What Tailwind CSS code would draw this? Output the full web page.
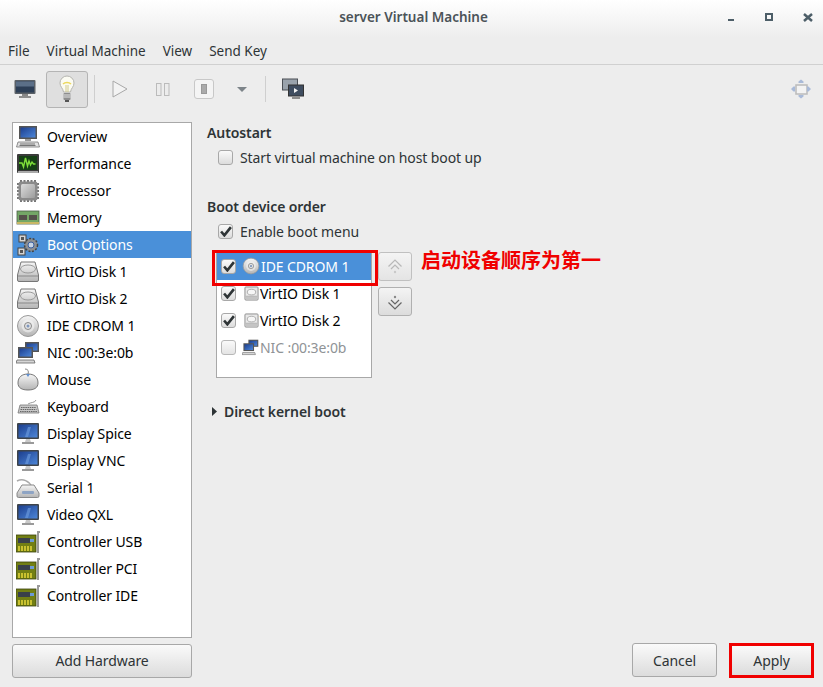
<!DOCTYPE html>
<html lang="en">
<head>
  <meta charset="UTF-8">
  <title>server Virtual Machine</title>
  <script src="https://cdn.jsdelivr.net/npm/@tailwindcss/browser@4"></script>
</head>
<body class="bg-[#ededed] font-['Noto_Sans','Noto_Sans_CJK_SC',sans-serif] text-[14px] tracking-[-0.1px] text-[#2e3436] overflow-hidden">

  <!-- shared icons -->
  <svg class="absolute w-0 h-0">
    <defs>
      <linearGradient id="screen" x1="0" y1="0" x2="1" y2="1"><stop offset="0" stop-color="#1c3f8f"/><stop offset="1" stop-color="#4d86d8"/></linearGradient>
      <linearGradient id="metal" x1="0" y1="0" x2="0" y2="1"><stop offset="0" stop-color="#f6f6f6"/><stop offset="1" stop-color="#b4b4b4"/></linearGradient>
      <linearGradient id="chip" x1="0" y1="0" x2="1" y2="1"><stop offset="0" stop-color="#dcdcdc"/><stop offset="1" stop-color="#9c9c9c"/></linearGradient>
    </defs>
    <symbol id="display" viewBox="0 0 24 24">
      <rect x="1" y="1" width="22" height="16" rx="1" fill="#3f444a"/>
      <rect x="2.500" y="2.500" width="19" height="13" fill="url(#screen)"/>
      <path d="M9 15l3-10h3l-3 10z" fill="#6f9ee0" opacity=".6"/>
      <path d="M10 17h4l1 3h-6z" fill="#c9c9c9"/><rect x="6" y="20" width="12" height="2" fill="#9a9a9a"/>
    </symbol>
    <symbol id="host" viewBox="0 0 24 24">
      <rect x="3" y="1" width="18" height="13" fill="#555"/><rect x="4.500" y="2.500" width="15" height="10" fill="url(#screen)"/>
      <rect x="9" y="14" width="6" height="2" fill="#999"/>
      <path d="M2 17h20l1.500 5H.5z" fill="#e2e2e2" stroke="#777" stroke-width=".8"/>
      <path d="M4 19h15M3.500 20.500h16" stroke="#777"/>
    </symbol>
    <symbol id="perf" viewBox="0 0 24 24">
      <rect x="1" y="2" width="22" height="19" rx="1" fill="#3b3b3b"/><rect x="3" y="4" width="18" height="14" fill="#164016"/>
      <path d="M3 11h3l1.500 4 2-9 2 8 1.500-5 1.500 4 1.500-3 1.500 2h2" fill="none" stroke="#7fe03a" stroke-width="1.400"/>
      <rect x="2" y="19" width="20" height="2" fill="#aaa"/>
    </symbol>
    <symbol id="cpu" viewBox="0 0 24 24">
      <path d="M5 3V1M8.500 3V1M12 3V1M15.500 3V1M19 3V1M5 23v-2M8.500 23v-2M12 23v-2M15.500 23v-2M19 23v-2M1 5h2M1 8.500h2M1 12h2M1 15.500h2M1 19h2M23 5h-2M23 8.500h-2M23 12h-2M23 15.500h-2M23 19h-2" stroke="#777" stroke-width="2"/>
      <rect x="2.500" y="2.500" width="19" height="19" rx="2.500" fill="#8a8a8a"/>
      <rect x="5" y="5" width="14" height="14" rx="1.500" fill="url(#chip)"/>
    </symbol>
    <symbol id="ram" viewBox="0 0 24 24">
      <rect x="1" y="5" width="22" height="13" fill="#74a766" stroke="#4d5f48" stroke-width=".8"/>
      <rect x="3" y="9" width="8" height="5" fill="#55514a"/><rect x="13" y="9" width="8" height="5" fill="#55514a"/>
      <rect x="1" y="16" width="22" height="2" fill="#c9b765"/>
    </symbol>
    <symbol id="gears" viewBox="0 0 24 24">
      <circle cx="15" cy="12" r="6.500" fill="#8c8f92" stroke="#444" stroke-width="1.500" stroke-dasharray="2 1.500"/><circle cx="15" cy="12" r="3" fill="#c8d4e4" stroke="#3a5fa0"/>
      <rect x="3" y="2" width="7" height="7" fill="#d5d5d5" stroke="#444"/><rect x="5" y="4" width="3" height="3" fill="#555"/>
      <rect x="2" y="15" width="7" height="7" fill="#d5d5d5" stroke="#444"/><rect x="4" y="17" width="3" height="3" fill="#555"/>
    </symbol>
    <symbol id="disk" viewBox="0 0 24 24">
      <path d="M5 2h14l3.500 13v5a1.500 1.500 0 0 1-1.500 1.500H3A1.500 1.500 0 0 1 1.500 20v-5z" fill="url(#metal)" stroke="#777"/>
      <ellipse cx="12" cy="9" rx="7.500" ry="4" fill="none" stroke="#999"/><path d="M2 16h20" stroke="#888"/>
    </symbol>
    <symbol id="boxdisk" viewBox="0 0 16 16">
      <rect x="1" y="1" width="14" height="14" rx="1" fill="#e8e8e8" stroke="#8c8c8c"/>
      <ellipse cx="8" cy="6.500" rx="4.500" ry="3" fill="#f6f6f6" stroke="#aaa"/><path d="M2 11h12" stroke="#999"/><rect x="2" y="11" width="12" height="3" fill="#c4c4c4"/>
    </symbol>
    <symbol id="cd" viewBox="0 0 24 24">
      <circle cx="12" cy="12" r="10.500" fill="url(#metal)" stroke="#999"/><circle cx="12" cy="12" r="6.500" fill="#f4f4f4" opacity=".6"/><circle cx="12" cy="12" r="3.500" fill="#e4e4e4" stroke="#888"/><circle cx="12" cy="12" r="1.500" fill="#7f97bd"/>
    </symbol>
    <symbol id="nic" viewBox="0 0 24 24">
      <rect x="9" y="1" width="14" height="10" fill="#555"/><rect x="10.500" y="2.500" width="11" height="7" fill="url(#screen)"/>
      <rect x="2" y="6" width="15" height="11" fill="#555"/><rect x="3.500" y="7.500" width="12" height="8" fill="url(#screen)"/>
      <path d="M1 19h17l1 3H0z" fill="#d6d6d6" stroke="#666" stroke-width=".8"/>
    </symbol>
    <symbol id="mouse" viewBox="0 0 24 24">
      <path d="M2 15c0-6 4-9 10-9s10 3 10 9c0 5-4 7-10 7S2 20 2 15z" fill="url(#metal)" stroke="#777"/>
      <path d="M9 1c3 0 4 2 3 5" fill="none" stroke="#888"/><path d="M10 6l2 3 2-3" fill="#5f8fd0"/>
    </symbol>
    <symbol id="keyboard" viewBox="0 0 24 24">
      <path d="M4 10h17l2 8H2z" fill="#c8c8c8" stroke="#777" stroke-width=".8"/>
      <path d="M5 12.500h15M4.500 14.500h16M4 16.500h17" stroke="#666" stroke-dasharray="1.500 .7"/>
      <path d="M12 9c3-2 7-1 8-4" fill="none" stroke="#999"/>
    </symbol>
    <symbol id="serial" viewBox="0 0 24 24">
      <path d="M1 5c6-3 12 0 15 6" fill="none" stroke="#aaa" stroke-width="1.500"/>
      <path d="M6 9h12l5 8v3a1.500 1.500 0 0 1-1.500 1.500h-19A1.500 1.500 0 0 1 1 20v-3z" fill="url(#metal)" stroke="#888"/>
      <rect x="6" y="15" width="12" height="3" rx="1" fill="#8ea4c4"/>
    </symbol>
    <symbol id="card" viewBox="0 0 24 24">
      <rect x="0" y="5" width="20" height="17" fill="#727f14" stroke="#3b420c" stroke-width=".8"/>
      <rect x="2" y="8" width="12" height="5" fill="#39404a"/><rect x="14" y="9" width="4" height="3" fill="#6c9ad6"/>
      <path d="M3 16v5M6 16v5M9 16v5M12 16v5M15 16v5" stroke="#e6d83a" stroke-width="1.500"/>
      <path d="M21 1h3v2h-1v20h-2z" fill="#9a9a9a"/>
    </symbol>
  </svg>

  <div class="flex flex-col h-[687px]">
    <!-- title bar -->
    <div class="relative h-[38px] shrink-0 flex items-center justify-center bg-gradient-to-b from-white to-[#ededed]">
      <span class="ml-[4px] text-[13.500px] tracking-normal font-semibold text-[#4b5358] -mt-[4px]">server Virtual Machine</span>
      <div class="absolute right-0 top-0 flex items-center h-[34px] pr-[10px]">
        <div class="w-[6px] h-[2px] bg-[#4d5e68] mt-[6px]"></div>
        <div class="ml-[31px] w-[8px] h-[8px] border-2 border-[#4d5e68]"></div>
        <svg class="ml-[30px]" width="10" height="9" viewBox="0 0 10 9"><path d="M1 1l8 7M9 1L1 8" stroke="#4d5e68" stroke-width="2.500"/></svg>
      </div>
    </div>

    <!-- menu bar -->
    <div class="h-[27px] shrink-0 flex items-center gap-[17px] px-[8px] border-b border-[#d0d0d0] text-[13.500px] tracking-normal">
      <span>File</span><span>Virtual Machine</span><span>View</span><span>Send Key</span>
    </div>

    <!-- toolbar -->
    <div class="h-[46px] shrink-0 flex items-center pl-[14px] pr-[11px] pt-[2px]">
      <svg width="22" height="20" viewBox="0 0 22 20"><rect x="0.500" y="1" width="21" height="14" rx="1" fill="#5a6066"/><rect x="2" y="2.500" width="18" height="11" fill="#2c3e56"/><rect x="2" y="2.500" width="18" height="5" fill="#5b6f88"/><rect x="8" y="15" width="6" height="2" fill="#888"/><rect x="5" y="17" width="12" height="2" fill="#8d8d8d"/></svg>
      <div class="ml-[10px] w-[42px] h-[37px] rounded-[3px] border border-[#b4b4b4] bg-[#dfdfdf] flex items-center justify-center">
        <svg width="16" height="28" viewBox="0 0 16 28"><path d="M8 1a7 7 0 0 0-7 7c0 4 3 5 3.500 9h7C12 13 15 12 15 8a7 7 0 0 0-7-7z" fill="#fbfbf2" stroke="#b5b5b0"/><path d="M4 9c2-2 6-2 8 0" fill="none" stroke="#ecd85c" stroke-width="1.500"/><path d="M7 10v7M9 10v7" stroke="#d0c98c"/><rect x="4.500" y="18" width="7" height="7" rx="1" fill="#8d8d8d"/><path d="M4.500 20h7M4.500 22h7" stroke="#e4e4e4"/><rect x="6" y="25" width="4" height="2" fill="#555"/></svg>
      </div>
      <div class="ml-[6px] w-px h-[28px] bg-[#cfcfcf]"></div>
      <svg class="ml-[17px]" width="16" height="18" viewBox="0 0 16 18"><path d="M1 1l14 8-14 8z" fill="#f3f3f3" stroke="#a8a8a8"/></svg>
      <svg class="ml-[28px]" width="14" height="13" viewBox="0 0 14 13"><rect x=".5" y=".5" width="4.500" height="12" fill="#ececec" stroke="#bbb"/><rect x="8.500" y=".5" width="4.500" height="12" fill="#ececec" stroke="#bbb"/></svg>
      <div class="ml-[24px] w-[20px] h-[20px] rounded-[3px] border border-[#c8c8c8] bg-[#f4f4f4] flex items-center justify-center">
        <div class="w-[6px] h-[10px] bg-[#aaa] border border-[#999]"></div>
      </div>
      <svg class="ml-[23px]" width="10" height="5" viewBox="0 0 10 5"><path d="M0 0h10L5 5z" fill="#7d8489"/></svg>
      <div class="ml-[18px] w-px h-[26px] bg-[#cfcfcf]"></div>
      <svg class="ml-[16px]" width="22" height="22" viewBox="0 0 22 22"><rect x=".5" y="1" width="15" height="11" fill="#9aa3ac" stroke="#4a4f55"/><rect x="6.500" y="7" width="15" height="11" fill="#3f4d60" stroke="#333"/><path d="M12 10l4 2.500-4 2.500z" fill="#f2f2f2"/><rect x="10" y="19" width="8" height="2" fill="#8d8d8d"/></svg>
      <svg class="ml-auto" width="22" height="20" viewBox="0 0 22 20"><rect x="6" y="6" width="11" height="9" fill="#f3f3f3" stroke="#bbb" stroke-width="1.500"/><path d="M8.500 2.500L11 .5l2.500 2v1.500h-5zM8.500 17.500L11 19.500l2.500-2V16h-5zM3.500 7.500L1 10l2.500 2.500H5v-5zM18.500 7.500L21 10l-2.500 2.500H17v-5z" fill="#a9bad8"/></svg>
    </div>

    <!-- main area -->
    <div class="flex-1 flex pt-[11px] pb-[9px] min-h-0">
      <!-- hardware list -->
      <div class="ml-[12px] w-[180px] flex flex-col shrink-0">
        <div class="h-[516px] bg-white border border-[#a8a8a8] text-black">
          <div class="h-[27px] flex items-center gap-[7px] pl-[3px]"><svg width="24" height="24" class="shrink-0"><use href="#host"/></svg>Overview</div>
          <div class="h-[27px] flex items-center gap-[7px] pl-[3px]"><svg width="24" height="24" class="shrink-0"><use href="#perf"/></svg>Performance</div>
          <div class="h-[27px] flex items-center gap-[7px] pl-[3px]"><svg width="24" height="24" class="shrink-0"><use href="#cpu"/></svg>Processor</div>
          <div class="h-[27px] flex items-center gap-[7px] pl-[3px]"><svg width="24" height="24" class="shrink-0"><use href="#ram"/></svg>Memory</div>
          <div class="h-[27px] flex items-center gap-[7px] pl-[3px] bg-[#4a90d9] text-white"><svg width="24" height="24" class="shrink-0"><use href="#gears"/></svg>Boot Options</div>
          <div class="h-[27px] flex items-center gap-[7px] pl-[3px]"><svg width="24" height="24" class="shrink-0"><use href="#disk"/></svg>VirtIO Disk 1</div>
          <div class="h-[27px] flex items-center gap-[7px] pl-[3px]"><svg width="24" height="24" class="shrink-0"><use href="#disk"/></svg>VirtIO Disk 2</div>
          <div class="h-[27px] flex items-center gap-[7px] pl-[3px]"><svg width="24" height="24" class="shrink-0"><use href="#cd"/></svg>IDE CDROM 1</div>
          <div class="h-[27px] flex items-center gap-[7px] pl-[3px]"><svg width="24" height="24" class="shrink-0"><use href="#nic"/></svg>NIC :00:3e:0b</div>
          <div class="h-[27px] flex items-center gap-[7px] pl-[3px]"><svg width="24" height="24" class="shrink-0"><use href="#mouse"/></svg>Mouse</div>
          <div class="h-[27px] flex items-center gap-[7px] pl-[3px]"><svg width="24" height="24" class="shrink-0"><use href="#keyboard"/></svg>Keyboard</div>
          <div class="h-[27px] flex items-center gap-[7px] pl-[3px]"><svg width="24" height="24" class="shrink-0"><use href="#display"/></svg>Display Spice</div>
          <div class="h-[27px] flex items-center gap-[7px] pl-[3px]"><svg width="24" height="24" class="shrink-0"><use href="#display"/></svg>Display VNC</div>
          <div class="h-[27px] flex items-center gap-[7px] pl-[3px]"><svg width="24" height="24" class="shrink-0"><use href="#serial"/></svg>Serial 1</div>
          <div class="h-[27px] flex items-center gap-[7px] pl-[3px]"><svg width="24" height="24" class="shrink-0"><use href="#display"/></svg>Video QXL</div>
          <div class="h-[27px] flex items-center gap-[7px] pl-[3px]"><svg width="24" height="24" class="shrink-0"><use href="#card"/></svg>Controller USB</div>
          <div class="h-[27px] flex items-center gap-[7px] pl-[3px]"><svg width="24" height="24" class="shrink-0"><use href="#card"/></svg>Controller PCI</div>
          <div class="h-[27px] flex items-center gap-[7px] pl-[3px]"><svg width="24" height="24" class="shrink-0"><use href="#card"/></svg>Controller IDE</div>
        </div>
        <button class="mt-[6px] h-[34px] pb-[2px] rounded-[3px] border border-[#a8a8a8] bg-gradient-to-b from-[#fafafa] to-[#dcdcdc]">Add Hardware</button>
      </div>

      <!-- details -->
      <div class="flex-1 flex flex-col justify-between pl-[15px] pr-[9px]">
        <div class="relative">
          <div class="font-semibold h-[22px] leading-[22px]">Autostart</div>
          <label class="mt-[3px] ml-[11px] flex items-center gap-[7px] h-[20px]">
            <span class="w-[15px] h-[15px] rounded-[3px] border border-[#a8a8a8] bg-gradient-to-b from-[#fafafa] to-[#dcdcdc]"></span>
            Start virtual machine on host boot up
          </label>

          <div class="mt-[29px] font-semibold h-[22px] leading-[22px]">Boot device order</div>
          <label class="mt-[3px] ml-[11px] flex items-center gap-[7px] h-[20px]">
            <span class="w-[15px] h-[15px] rounded-[3px] border border-[#a8a8a8] bg-gradient-to-b from-[#fafafa] to-[#dcdcdc] flex items-center justify-center"><svg width="12" height="11" viewBox="0 0 11 10"><path d="M1 5l3 3.500L10 1" fill="none" stroke="#2e3436" stroke-width="2.400"/></svg></span>
            Enable boot menu
          </label>

          <div class="mt-[10px] ml-[9px] flex items-start">
            <div class="relative w-[156px] h-[127px] bg-white border border-[#a8a8a8] text-black">
              <div class="h-[28px] flex items-center bg-[#4a90d9] text-white pl-[4px]">
                <span class="w-[15px] h-[15px] rounded-[3px] border border-[#a8a8a8] bg-gradient-to-b from-[#fafafa] to-[#dcdcdc] flex items-center justify-center"><svg width="12" height="11" viewBox="0 0 11 10"><path d="M1 5l3 3.500L10 1" fill="none" stroke="#2e3436" stroke-width="2.400"/></svg></span>
                <svg class="ml-[6px] mr-[1px]" width="18" height="18"><use href="#cd"/></svg>IDE CDROM 1
              </div>
              <div class="h-[27px] flex items-center pl-[4px]">
                <span class="w-[15px] h-[15px] rounded-[3px] border border-[#a8a8a8] bg-gradient-to-b from-[#fafafa] to-[#dcdcdc] flex items-center justify-center"><svg width="12" height="11" viewBox="0 0 11 10"><path d="M1 5l3 3.500L10 1" fill="none" stroke="#2e3436" stroke-width="2.400"/></svg></span>
                <svg class="ml-[8px] mr-[1px]" width="15" height="15"><use href="#boxdisk"/></svg>VirtIO Disk 1
              </div>
              <div class="h-[27px] flex items-center pl-[4px]">
                <span class="w-[15px] h-[15px] rounded-[3px] border border-[#a8a8a8] bg-gradient-to-b from-[#fafafa] to-[#dcdcdc] flex items-center justify-center"><svg width="12" height="11" viewBox="0 0 11 10"><path d="M1 5l3 3.500L10 1" fill="none" stroke="#2e3436" stroke-width="2.400"/></svg></span>
                <svg class="ml-[8px] mr-[1px]" width="15" height="15"><use href="#boxdisk"/></svg>VirtIO Disk 2
              </div>
              <div class="h-[27px] flex items-center pl-[4px] text-[#8f9396]">
                <span class="w-[15px] h-[15px] rounded-[3px] border border-[#b8b8b8] bg-gradient-to-b from-[#fafafa] to-[#e4e4e4]"></span>
                <svg class="ml-[6px] mr-[1px]" width="17" height="17"><use href="#nic"/></svg>NIC :00:3e:0b
              </div>
              <!-- annotation box round the first row -->
              <div class="absolute left-[-5px] top-[-2px] w-[166px] h-[36px] border-[3px] border-[#f00000]"></div>
            </div>
            <div class="ml-[6px] mt-[1px] flex flex-col gap-[6px]">
              <button class="w-[34px] h-[29px] rounded-[3px] border border-[#c0c0c0] bg-gradient-to-b from-[#f4f4f4] to-[#e4e4e4] flex items-center justify-center"><svg width="16" height="16" viewBox="0 0 16 16"><path d="M1.500 7.500L8 1l6.500 6.500M4 10l4-4 4 4" fill="none" stroke="#b8b8b8" stroke-width="1.200"/><circle cx="8" cy="13" r="1.200" fill="#c8c8c8"/></svg></button>
              <button class="w-[34px] h-[29px] rounded-[3px] border border-[#b0b0b0] bg-gradient-to-b from-[#f4f4f4] to-[#dcdcdc] flex items-center justify-center"><svg width="16" height="16" viewBox="0 0 16 16"><path d="M1.500 8.500L8 15l6.500-6.500M4 6l4 4 4-4" fill="none" stroke="#666" stroke-width="1.200"/><circle cx="8" cy="3" r="1.200" fill="#888"/></svg></button>
            </div>
            <div class="ml-[9px] mt-[-4px] text-[20px] tracking-normal leading-[28px] font-bold text-[#f00000]">启动设备顺序为第一</div>
          </div>

          <div class="mt-[22px] flex items-center h-[22px]">
            <svg class="ml-[5px] mr-[7px]" width="5" height="9" viewBox="0 0 5 9"><path d="M0 0l5 4.500L0 9z" fill="#2e3436"/></svg>
            <span class="font-semibold">Direct kernel boot</span>
          </div>
        </div>

        <div class="flex justify-end gap-[12px]">
          <button class="w-[85px] h-[34px] pt-[1px] rounded-[3px] border border-[#a8a8a8] bg-gradient-to-b from-[#fafafa] to-[#dcdcdc]">Cancel</button>
          <button class="w-[85px] h-[35px] border-[3px] border-[#f00000] bg-gradient-to-b from-[#fafafa] to-[#dcdcdc]">Apply</button>
        </div>
      </div>
    </div>
  </div>
</body>
</html>
